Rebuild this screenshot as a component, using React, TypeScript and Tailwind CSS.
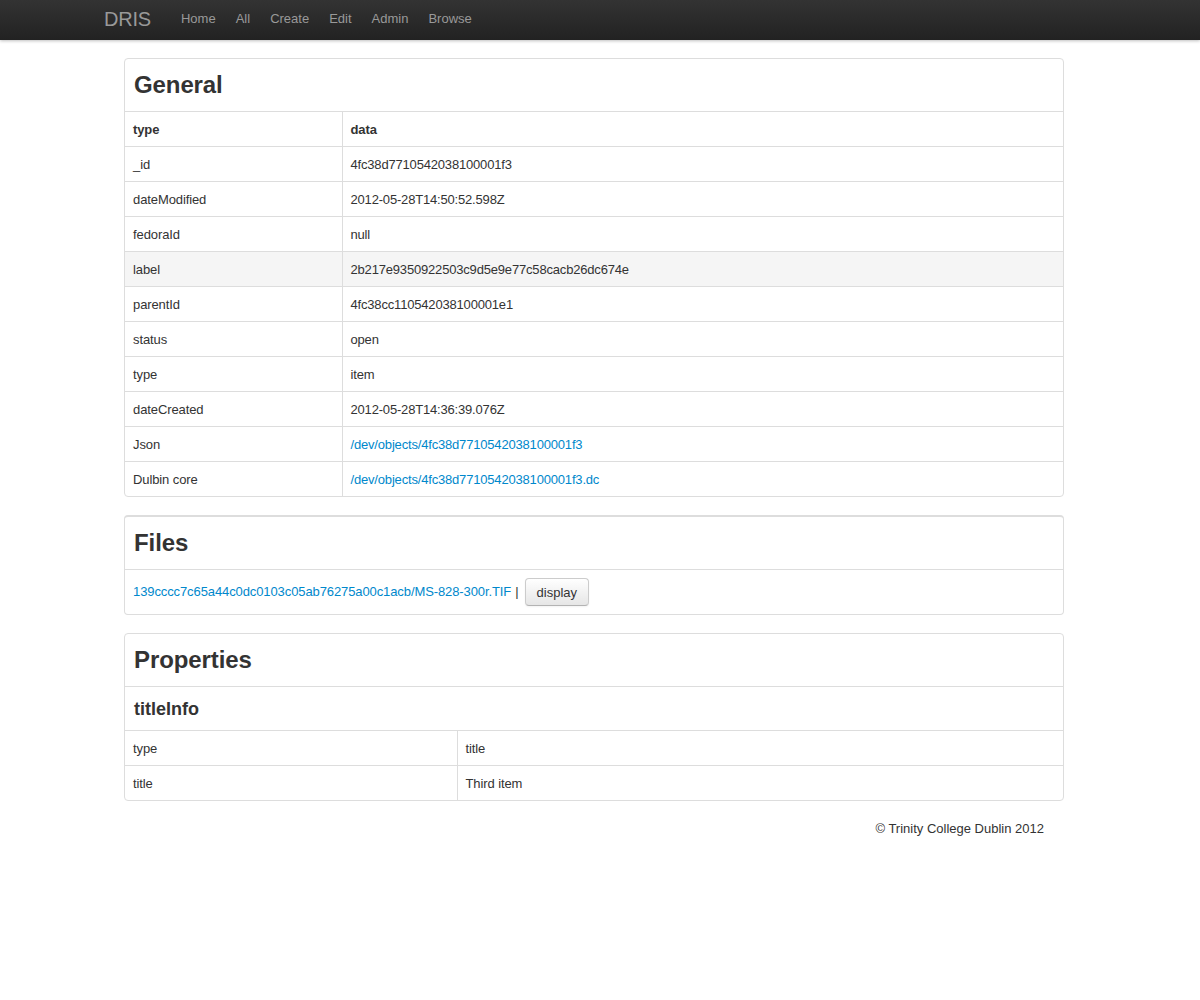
import React from "react";

const generalRows: { key: string; value: string; link?: boolean; active?: boolean }[] = [
    { key: "_id", value: "4fc38d7710542038100001f3" },
    { key: "dateModified", value: "2012-05-28T14:50:52.598Z" },
    { key: "fedoraId", value: "null" },
    { key: "label", value: "2b217e9350922503c9d5e9e77c58cacb26dc674e", active: true },
    { key: "parentId", value: "4fc38cc110542038100001e1" },
    { key: "status", value: "open" },
    { key: "type", value: "item" },
    { key: "dateCreated", value: "2012-05-28T14:36:39.076Z" },
    { key: "Json", value: "/dev/objects/4fc38d7710542038100001f3", link: true },
    { key: "Dulbin core", value: "/dev/objects/4fc38d7710542038100001f3.dc", link: true },
];

const navLinks = ["Home", "All", "Create", "Edit", "Admin", "Browse"];

function Card({ title, thickTop, children }: { title: string; thickTop?: boolean; children: React.ReactNode }) {
    return (
        <section
            className={`border border-[#dddddd] rounded-[4px] overflow-hidden ${thickTop ? "border-t-2" : ""}`}
        >
            <h2 className="px-[9px] py-[8px] text-[24px] leading-[36px] font-bold text-[#333333] tracking-[-0.1px]">
                {title}
            </h2>
            {children}
        </section>
    );
}

export default function App() {
    return (
        <div
            className="min-h-[1000px] bg-white text-[13px] leading-[18px] text-[#333333]"
            style={{ fontFamily: '"Liberation Sans", Arial, Helvetica, sans-serif' }}
        >
            {/* Navbar */}
            <header className="h-[40px] bg-gradient-to-b from-[#333333] to-[#222222] shadow-[0_1px_3px_rgba(0,0,0,0.25)]">
                <div className="w-[1188px] h-full flex items-center">
                    <span className="ml-[104px] pr-[20px] text-[20px] leading-[20px] text-[#999999] -translate-y-[1px] tracking-[-0.2px]">DRIS</span>
                    <nav className="flex items-center -translate-y-[1px]">
                        {navLinks.map((name) => (
                            <a key={name} href="#" className="px-[10px] text-[13px] leading-[18px] text-[#999999]">
                                {name}
                            </a>
                        ))}
                    </nav>
                </div>
            </header>

            <div className="w-[1188px]">
                <main className="w-[940px] mx-auto pt-[18px] flex flex-col gap-[18px]">
                    {/* General */}
                    <Card title="General">
                        <table className="w-full border-collapse tracking-[-0.1px]">
                            <tbody>
                                <tr className="border-t border-[#dddddd]">
                                    <th className="w-[217px] text-left font-bold px-[8px] pt-[9px] pb-[7px] border-r border-[#dddddd]">type</th>
                                    <th className="text-left font-bold px-[8px] pt-[9px] pb-[7px]">data</th>
                                </tr>
                                {generalRows.map((row) => (
                                    <tr
                                        key={row.key}
                                        className={`border-t border-[#dddddd] ${row.active ? "bg-[#f5f5f5]" : ""}`}
                                    >
                                        <td className="px-[8px] pt-[9px] pb-[7px] border-r border-[#dddddd]">{row.key}</td>
                                        <td className="px-[8px] pt-[9px] pb-[7px] tracking-[-0.18px]">
                                            {row.link ? (
                                                <a href="#" className="text-[#0088cc]">{row.value}</a>
                                            ) : (
                                                row.value
                                            )}
                                        </td>
                                    </tr>
                                ))}
                            </tbody>
                        </table>
                    </Card>

                    {/* Files */}
                    <Card title="Files" thickTop>
                        <div className="border-t border-[#dddddd] px-[8px] py-[8px] flex items-center">
                            <a href="#" className="text-[#0088cc] tracking-[-0.1px]">
                                139cccc7c65a44c0dc0103c05ab76275a00c1acb/MS-828-300r.TIF
                            </a>
                            <span className="ml-[4px]">|</span>
                            <button className="ml-[6px] px-[11px] pt-[5px] pb-[3px] text-[13px] leading-[18px] text-[#333333] rounded-[4px] border border-[#cccccc] border-b-[#b3b3b3] bg-gradient-to-b from-white to-[#e6e6e6] shadow-[inset_0_1px_0_rgba(255,255,255,0.2),0_1px_2px_rgba(0,0,0,0.05)]">
                                display
                            </button>
                        </div>
                    </Card>

                    {/* Properties */}
                    <Card title="Properties">
                        <h3 className="border-t border-[#dddddd] px-[9px] pt-[9px] pb-[7px] text-[18px] leading-[27px] font-bold">
                            titleInfo
                        </h3>
                        <table className="w-full border-collapse tracking-[-0.1px]">
                            <tbody>
                                <tr className="border-t border-[#dddddd]">
                                    <td className="w-[332px] px-[8px] pt-[9px] pb-[7px] border-r border-[#dddddd]">type</td>
                                    <td className="px-[8px] pt-[9px] pb-[7px]">title</td>
                                </tr>
                                <tr className="border-t border-[#dddddd]">
                                    <td className="w-[332px] px-[8px] pt-[9px] pb-[7px] border-r border-[#dddddd]">title</td>
                                    <td className="px-[8px] pt-[9px] pb-[7px]">Third item</td>
                                </tr>
                            </tbody>
                        </table>
                    </Card>

                    <footer className="flex justify-end pr-[20px] pt-[1px]">
                        <p>© Trinity College Dublin 2012</p>
                    </footer>
                </main>
            </div>
        </div>
    );
}
